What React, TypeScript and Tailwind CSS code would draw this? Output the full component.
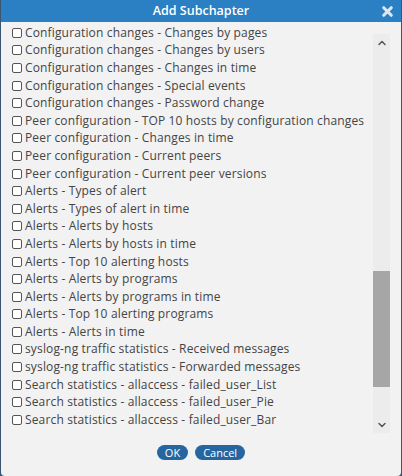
import { ChevronDown, ChevronUp, X } from "lucide-react";

const items = [
	"Configuration changes - Changes by pages",
	"Configuration changes - Changes by users",
	"Configuration changes - Changes in time",
	"Configuration changes - Special events",
	"Configuration changes - Password change",
	"Peer configuration - TOP 10 hosts by configuration changes",
	"Peer configuration - Changes in time",
	"Peer configuration - Current peers",
	"Peer configuration - Current peer versions",
	"Alerts - Types of alert",
	"Alerts - Types of alert in time",
	"Alerts - Alerts by hosts",
	"Alerts - Alerts by hosts in time",
	"Alerts - Top 10 alerting hosts",
	"Alerts - Alerts by programs",
	"Alerts - Alerts by programs in time",
	"Alerts - Top 10 alerting programs",
	"Alerts - Alerts in time",
	"syslog-ng traffic statistics - Received messages",
	"syslog-ng traffic statistics - Forwarded messages",
	"Search statistics - allaccess - failed_user_List",
	"Search statistics - allaccess - failed_user_Pie",
	"Search statistics - allaccess - failed_user_Bar",
];

export default function App() {
	return (
		<div
			className="w-[402px] h-[476px] bg-[#3b5670] px-[1px] text-[#444]"
			style={{ fontFamily: '"Open Sans", "Noto Sans", sans-serif' }}
		>
			<div className="h-full flex flex-col bg-[#f2f2f2] rounded-b-[4px] overflow-hidden">
				<header className="h-[22px] bg-[#2b7fc3] flex items-center justify-center relative text-white text-[12.5px] font-semibold">
					Add Subchapter
					<X className="absolute right-[6px] top-[4px] w-[15px] h-[15px] text-[#dbe8f4]" strokeWidth={5} />
				</header>
				<div className="flex flex-1 pt-[2px]">
					<ul className="flex-1 pl-[11px]">
						{items.map((t) => (
							<li
								key={t}
								className="flex items-center h-[17.6px] gap-[3px] text-[12px] tracking-[0.15px] whitespace-nowrap"
							>
								<span className="w-[10px] h-[10px] border border-[#555] rounded-[2px] bg-white shrink-0" />
								<span>{t}</span>
							</li>
						))}
					</ul>
					<div className="w-[17px] mr-[11px] mt-[10px] h-[399px] bg-[#ececec] flex flex-col items-center">
						<div className="h-[17px] flex items-center justify-center">
							<ChevronUp className="w-[12px] h-[12px] text-[#555]" strokeWidth={3} />
						</div>
						<div className="flex-1 w-full flex flex-col">
							<div className="h-[220px]" />
							<div className="h-[116px] bg-[#a6a6a6]" />
						</div>
						<div className="h-[17px] flex items-center justify-center">
							<ChevronDown className="w-[12px] h-[12px] text-[#555]" strokeWidth={3} />
						</div>
					</div>
				</div>
				<footer className="h-[43px] flex items-start justify-center gap-[7px] pt-[12px]">
					<button className="h-[15px] px-[8px] rounded-full bg-[#2566a0] text-white text-[11px] leading-[15px]">OK</button>
					<button className="h-[15px] px-[8px] rounded-full bg-[#2566a0] text-white text-[11px] leading-[15px]">Cancel</button>
				</footer>
			</div>
		</div>
	);
}
